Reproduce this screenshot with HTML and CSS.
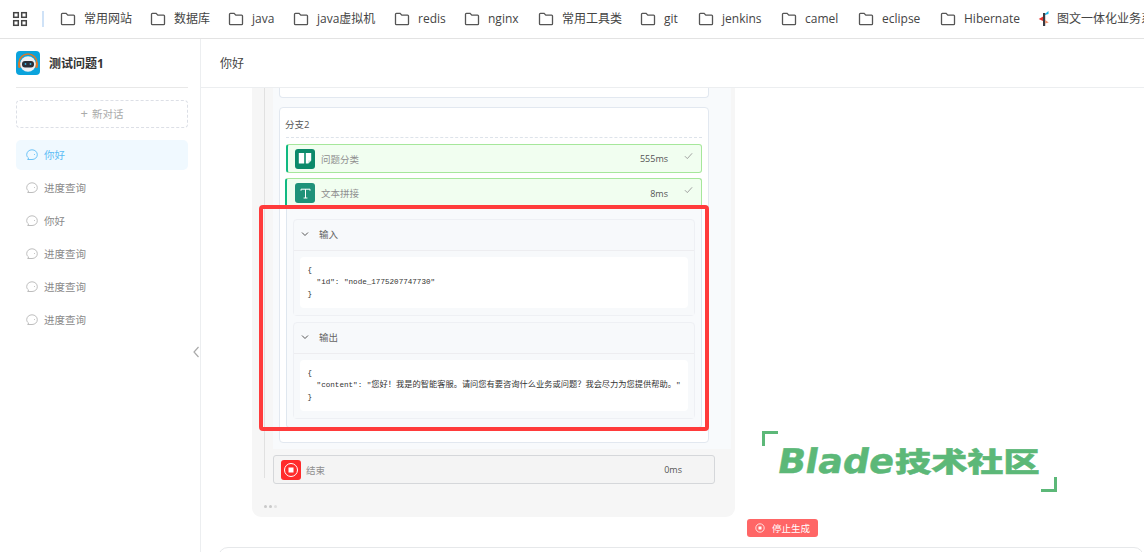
FILE: index.html
```html
<!DOCTYPE html>
<html lang="zh-CN">
<head>
<meta charset="utf-8">
<title>测试问题1</title>
<link rel="stylesheet" href="styles.css">
</head>
<body>
<svg class="defs" width="0" height="0" aria-hidden="true">
  <symbol id="folder" viewBox="0 0 16 14"><path d="M1.5 2.2c0-.5.4-.9.9-.9h3.7l1.7 1.9h5.8c.5 0 .9.4.9.9v7.7c0 .5-.4.9-.9.9H2.4c-.5 0-.9-.4-.9-.9z" fill="none" stroke="#555" stroke-width="1.3"/></symbol>
  <symbol id="chat" viewBox="0 0 12 12"><path d="M6 .8c3 0 5.3 2.1 5.3 4.9S9 10.500 6 10.500H1.700l.9-1.500C1.300 8.100.7 7 .7 5.700.7 2.900 3 .8 6 .8z" fill="none" stroke="currentColor" stroke-width=".9"/><circle cx="8.500" cy="5.600" r=".5" fill="currentColor"/></symbol>
  <symbol id="chev" viewBox="0 0 8 6"><path d="M1 1.500l3 3 3-3" fill="none" stroke="#555" stroke-width="1"/></symbol>
  <symbol id="tick" viewBox="0 0 10 8"><path d="M1 4.200l2.700 2.700L9 1" fill="none" stroke="#999" stroke-width="1"/></symbol>
</svg>

<nav class="bookmarks">
  <svg class="apps" width="16" height="16" viewBox="0 0 16 16"><g fill="none" stroke="#444" stroke-width="1.500"><rect x="1.700" y="1.700" width="4.600" height="4.600"/><rect x="9.700" y="1.700" width="4.600" height="4.600"/><rect x="1.700" y="9.700" width="4.600" height="4.600"/><rect x="9.700" y="9.700" width="4.600" height="4.600"/></g></svg>
  <span class="bar-sep"></span>
  <a class="mark"><svg class="fold"><use href="#folder"/></svg><span class="w48">常用网站</span></a>
  <a class="mark"><svg class="fold"><use href="#folder"/></svg><span class="w36">数据库</span></a>
  <a class="mark"><svg class="fold"><use href="#folder"/></svg><span class="w23">java</span></a>
  <a class="mark"><svg class="fold"><use href="#folder"/></svg><span class="w59">java虚拟机</span></a>
  <a class="mark"><svg class="fold"><use href="#folder"/></svg><span class="w28">redis</span></a>
  <a class="mark"><svg class="fold"><use href="#folder"/></svg><span class="w32">nginx</span></a>
  <a class="mark"><svg class="fold"><use href="#folder"/></svg><span class="w60">常用工具类</span></a>
  <a class="mark"><svg class="fold"><use href="#folder"/></svg><span class="w16">git</span></a>
  <a class="mark"><svg class="fold"><use href="#folder"/></svg><span class="w40">jenkins</span></a>
  <a class="mark"><svg class="fold"><use href="#folder"/></svg><span class="w35">camel</span></a>
  <a class="mark"><svg class="fold"><use href="#folder"/></svg><span class="w42">eclipse</span></a>
  <a class="mark"><svg class="fold"><use href="#folder"/></svg><span class="w55">Hibernate</span></a>
  <a class="mark"><svg class="site" width="12" height="18" viewBox="0 0 12 18"><path d="M10.500 1L5 5.500l5.500-1.500z" fill="#19b5e8"/><path d="M6 6L.7 9l5.300 2.500z" fill="#e8352e"/><path d="M5 3h2.200v13H5z" fill="#3a3a42"/><path d="M7.200 10l3.500 2.500-3.500 1z" fill="#f0916a"/></svg><span>图文一体化业务系统</span></a>
</nav>

<div class="app">
  <aside class="sidebar">
    <div class="brand">
      <svg class="logo" width="24" height="24" viewBox="0 0 24 24"><rect width="24" height="24" rx="4" fill="#0ba3dc"/><path d="M3 15v-3a9 9 0 0 1 18 0v3" fill="none" stroke="#d9792b" stroke-width="1.600"/><rect x="2.200" y="11" width="2.600" height="6" rx="1.200" fill="#d9792b"/><rect x="19.200" y="11" width="2.600" height="6" rx="1.200" fill="#d9792b"/><circle cx="12" cy="13" r="7.800" fill="#eef0f3"/><rect x="6" y="10" width="12" height="6.500" rx="3" fill="#2a2f38"/><circle cx="9.500" cy="13" r=".9" fill="#3fb6e8"/><circle cx="14.500" cy="13" r=".9" fill="#3fb6e8"/></svg>
      <strong class="brand-name">测试问题1</strong>
    </div>
    <button class="new-chat"><span class="plus">+</span>新对话</button>
    <ul class="chats">
      <li class="chat active"><svg class="chat-ic"><use href="#chat"/></svg>你好</li>
      <li class="chat"><svg class="chat-ic"><use href="#chat"/></svg>进度查询</li>
      <li class="chat"><svg class="chat-ic"><use href="#chat"/></svg>你好</li>
      <li class="chat"><svg class="chat-ic"><use href="#chat"/></svg>进度查询</li>
      <li class="chat"><svg class="chat-ic"><use href="#chat"/></svg>进度查询</li>
      <li class="chat"><svg class="chat-ic"><use href="#chat"/></svg>进度查询</li>
    </ul>
    <svg class="collapse" width="8" height="12" viewBox="0 0 8 12"><path d="M6.500 1L2 6l4.500 5" fill="none" stroke="#aaa" stroke-width="1.200"/></svg>
  </aside>

  <main class="main">
    <header class="topic">你好</header>
    <div class="scroll">
      <section class="panel">
        <div class="flow">
          <div class="branches">
            <div class="card stub"></div>
            <div class="card branch">
              <div class="branch-title">分支2</div>
              <div class="step ok">
                <span class="step-ic book"><svg width="14" height="13" viewBox="0 0 14 13"><path d="M.8 1h5.400v10.500H.8zM7.800 1h5.400v7.500l-3 3H7.800z" fill="#fff"/><path d="M10.200 8.500h3l-3 3z" fill="#cfe9e1"/></svg></span>
                <span class="step-name">问题分类</span><span class="step-time">555ms</span><svg class="tick"><use href="#tick"/></svg>
              </div>
              <div class="step ok open">
                <div class="step-head">
                  <span class="step-ic text"><svg width="11" height="11" viewBox="0 0 11 11"><path d="M1 2.700V1.200h9v1.500M5.500 1.200v8.800M3.600 10h3.800" fill="none" stroke="#fff" stroke-width="1"/></svg></span>
                  <span class="step-name">文本拼接</span><span class="step-time">8ms</span><svg class="tick"><use href="#tick"/></svg>
                </div>
                <div class="detail">
                  <div class="io">
                    <div class="io-head"><svg class="chev"><use href="#chev"/></svg>输入</div>
                    <div class="io-body"><div class="code"><span class="ln">{</span><span class="ln">  "id": "node_1775207747730"</span><span class="ln">}</span></div></div>
                  </div>
                  <div class="io">
                    <div class="io-head"><svg class="chev"><use href="#chev"/></svg>输出</div>
                    <div class="io-body"><div class="code"><span class="ln">{</span><span class="ln">  "content": "<span class="cjk">您好！我是的智能客服。请问您有要咨询什么业务或问题？我会尽力为您提供帮助。</span>"</span><span class="ln">}</span></div></div>
                  </div>
                </div>
              </div>
            </div>
          </div>
          <div class="step end">
            <span class="step-ic stop"><svg width="16" height="16" viewBox="0 0 16 16"><circle cx="8" cy="8" r="6.500" fill="none" stroke="#fff" stroke-width="1"/><rect x="5.500" y="5.500" width="5" height="5" fill="#fff"/></svg></span>
            <span class="step-name">结束</span><span class="step-time t0">0ms</span>
          </div>
        </div>
        <div class="dots"><i></i><i></i><i></i></div>
      </section>
      <div class="stop-row">
        <button class="stop-btn"><svg width="10" height="10" viewBox="0 0 10 10"><circle cx="5" cy="5" r="4.200" fill="none" stroke="#fff" stroke-width=".8"/><rect x="3.500" y="3.500" width="3" height="3" fill="#fff"/></svg>停止生成</button>
      </div>
      <div class="composer"></div>
    </div>
  </main>
</div>

<div class="highlight"></div>
<div class="watermark">
  <span class="wm-corner tl"></span>
  <span class="wm-text"><span class="wm-lat">Blade</span><span class="wm-cjk">技术社区</span></span>
  <span class="wm-corner br"></span>
</div>
</body>
</html>
```

FILE: styles.css
```css
* { box-sizing: border-box; }
html, body { margin: 0; padding: 0; height: 552px; overflow: hidden; background: #fff; }
body { font-family: "Open Sans", "Noto Sans CJK SC", sans-serif; color: #444; position: relative; }
.defs { position: absolute; }
ul { list-style: none; margin: 0; padding: 0; }

/* bookmarks */
.bookmarks { height: 39px; border-bottom: 1px solid #e3e3e3; display: flex; align-items: center; padding-left: 12px; white-space: nowrap; overflow: hidden; font-size: 12px; color: #444; }
.apps { flex: none; margin-top: -1px; }
.bar-sep { width: 2px; height: 16px; background: #cfe2f7; margin: 0 16px 0 14px; flex: none; }
.mark { display: flex; align-items: center; margin-right: 18px; flex: none; }
.mark span { padding-bottom: 2px; }
.fold { width: 16px; height: 14px; margin-right: 8px; flex: none; }
.site { margin-right: 7px; flex: none; }
.w16 { width: 16px; } .w23 { width: 23px; } .w28 { width: 28px; } .w32 { width: 32px; } .w35 { width: 35px; } .w36 { width: 36px; } .w40 { width: 41px; } .w42 { width: 40px; } .w48 { width: 48px; } .w55 { width: 56px; } .w59 { width: 59px; } .w60 { width: 60px; }

.app { display: flex; height: 513px; }

/* sidebar */
.sidebar { width: 201px; flex: none; border-right: 1px solid #eceef0; padding: 0 12px 0 16px; position: relative; }
.brand { height: 49px; border-bottom: 1px solid #e8e8e8; display: flex; align-items: center; gap: 9px; padding-bottom: 1px; }
.brand-name { font-size: 12px; font-weight: 700; color: #333; }
.logo { flex: none; }
.new-chat { display: flex; align-items: center; justify-content: center; gap: 4px; width: 100%; height: 28px; margin-top: 12px; border: 1px dashed #dcdfe6; border-radius: 4px; background: #fff; color: #aaa; font: inherit; font-size: 10.500px; padding: 0 0 2px; }
.plus { font-size: 13px; line-height: 1; }
.chats { margin-top: 12px; display: flex; flex-direction: column; gap: 3px; }
.chat { height: 30px; display: flex; align-items: center; padding: 0 0 2px 10px; font-size: 10.500px; color: #8a8a8a; border-radius: 5px; }
.chat-ic { width: 12px; height: 12px; margin: 2px 6px 0 0; color: #b5b5b5; flex: none; }
.chat.active { background: #f0f9ff; color: #5cbcf5; }
.chat.active .chat-ic { color: #5cbcf5; }
.collapse { position: absolute; left: 192px; top: 307px; }

/* main */
.main { flex: 1; min-width: 0; display: flex; flex-direction: column; }
.topic { height: 49px; flex: none; border-bottom: 1px solid #eceef0; padding: 0 0 1px 19px; display: flex; align-items: center; font-size: 12px; color: #444; }
.scroll { flex: 1; min-height: 0; overflow: hidden; padding-left: 51px; }

.panel { width: 483px; height: 429px; background: #f6f6f6; border-radius: 0 0 9px 9px; padding-left: 12px; }
.flow { border-left: 1px solid #e1e1e1; height: 390px; padding-left: 8px; }
.branches { background: #f8fafc; height: 361px; padding: 0 23px 0 6px; width: 458px; }
.card { background: #fff; border: 1px solid #e2e8f0; border-radius: 4px; width: 430px; }
.stub { height: 10px; border-top: 0; border-radius: 0 0 4px 4px; margin-bottom: 9px; }
.branch { height: 336px; padding: 0 6px; }
.branch-title { height: 30px; border-bottom: 1px dashed #dde3ea; font-size: 9.500px; color: #555; display: flex; align-items: center; padding-top: 2px; margin-bottom: 6px; text-indent: -1px; }

.step { display: flex; align-items: center; font-size: 9.500px; border: 1px solid #a6e79b; border-left: 2px solid #10b981; background: #f1fef0; border-radius: 3px; }
.step.ok { width: 416px; padding-left: 7px; height: 29px; margin-bottom: 5px; }
.step.open { display: block; height: 250px; background: #f8fafc; padding: 0; margin: 0; border-color: #dfe7ef; border-left-width: 1px; }
.step-head { height: 27px; display: flex; align-items: center; padding: 2px 0 0 8px; background: #f1fef0; margin: -1px -1px 0 -2px; border: 1px solid #a6e79b; border-left: 2px solid #10b981; border-bottom: 0; border-radius: 3px 3px 0 0; }
.step-ic { width: 20px; height: 20px; border-radius: 3px; display: flex; align-items: center; justify-content: center; flex: none; margin-right: 6px; }
.book { background: #0b8a6a; }
.text { background: #1f9279; }
.stop { background: #ff2b2b; margin-right: 5px; }
.step-name { color: #8f8f8f; font-size: 9.500px; }
.step-time { color: #555; font-size: 9px; margin-left: auto; }
.tick { width: 9px; height: 8px; margin: -5px 8px 0 16px; flex: none; }
.step-head .tick { margin-top: -7px; }
.detail { padding: 14px 6px 0; }
.io { border: 1px solid #eef0f4; border-radius: 4px; background: #f7f9fb; margin-bottom: 6px; }
.io-head { height: 31px; display: flex; align-items: center; font-size: 9.500px; color: #666; border-bottom: 1px solid #ededf0; padding: 0 0 3px 7px; }
.chev { width: 8px; height: 6px; margin-right: 10px; }
.io-body { padding: 6px 6px 7px; background: #f7f9fb; }
.code { background: #fff; border-radius: 4px; height: 51px; padding: 7px 7.500px 0; font-family: "Liberation Mono", "Noto Sans CJK SC", monospace; font-size: 7.600px; line-height: 12.200px; color: #333; }
.ln { display: block; white-space: pre; height: 12.200px; }
.cjk { font-family: "Noto Sans CJK SC", sans-serif; font-size: 8.240px; line-height: 1; }

.end { width: 442px; height: 29px; border: 1px solid #d5d7da; background: #f4f4f4; padding-left: 7px; margin-top: 6px; border-radius: 3px; }
.t0 { margin-right: 32px; }
.dots { display: flex; gap: 2px; margin-top: 27px; }
.dots i { width: 3px; height: 3px; border-radius: 50%; background: #c9c9c9; display: block; }
.dots i:last-child { background: #e0e0e0; }

.stop-row { width: 566px; display: flex; justify-content: flex-end; margin-top: 2px; }
.stop-btn { width: 71px; height: 18px; padding: 0; border: 0; border-radius: 3px; background: #ff6666; color: #fff; font: inherit; font-size: 9.500px; display: flex; align-items: center; justify-content: center; gap: 7px; }
.composer { margin: 10px 0 0 -34px; height: 60px; border: 1px solid #e6e8ea; border-radius: 10px; }

/* annotation overlays */
.highlight { position: absolute; left: 259px; top: 205px; width: 450px; height: 226px; border: 4px solid #ff3b3b; border-radius: 4px; }
.watermark { position: absolute; left: 762px; top: 431px; width: 295px; height: 61px; color: #5cb878; }
.wm-corner { position: absolute; width: 16px; height: 15px; border: 0 solid #5cb878; }
.tl { left: 0; top: 0; border-width: 3px 0 0 3px; }
.br { right: 0; bottom: 0; border-width: 0 3px 3px 0; }
.wm-text { position: absolute; left: 16px; top: 13px; white-space: nowrap; font-weight: 700; line-height: 34px; display: flex; align-items: center; -webkit-text-stroke: .5px #5cb878; }
.wm-lat { font-family: "DejaVu Sans", sans-serif; font-size: 34px; display: inline-block; width: 117px; transform: skewX(-10deg) scaleX(1.080); transform-origin: left center; }
.wm-cjk { font-family: "Noto Sans CJK SC", sans-serif; font-size: 27px; font-weight: 900; display: inline-block; transform: scaleX(1.340); transform-origin: left center; }
```
